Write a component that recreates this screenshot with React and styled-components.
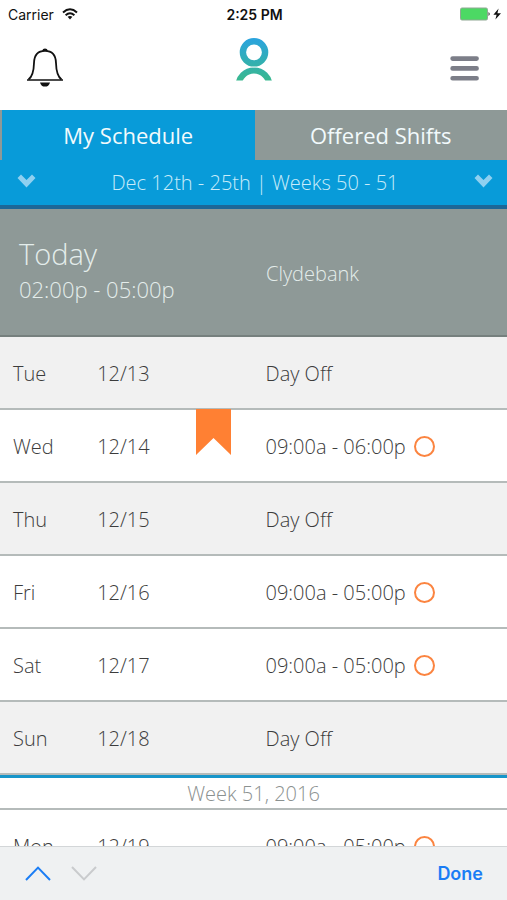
import React, { useState } from 'react'
import styled, { createGlobalStyle } from 'styled-components'

const GlobalStyle = createGlobalStyle`
  * {
    box-sizing: border-box;
  }

  body {
    margin: 0;
    background: #fff;
    font-family: 'Open Sans', 'Noto Sans', sans-serif;
    font-weight: 300;
    color: #3c3c3c;
  }

  button {
    border: 0;
    padding: 0;
    background: none;
    font: inherit;
    color: inherit;
    cursor: pointer;
  }

  svg {
    display: block;
  }
`

const Screen = styled.div`
  display: flex;
  flex-direction: column;
  height: 100vh;
`

const StatusBar = styled.div`
  display: grid;
  grid-template-columns: 1fr auto 1fr;
  align-items: center;
  flex: none;
  height: 28px;
  padding: 0 6px 0 8px;
  font-family: Inter, 'Liberation Sans', sans-serif;
  font-size: 14px;
  font-weight: 400;
  color: #111;
`

const StatusGroup = styled.div`
  display: flex;
  align-items: center;
  gap: 8px;
  justify-content: ${props => props.$end ? 'flex-end' : 'flex-start'};
`

const Clock = styled.time`
  font-weight: 600;
`

const Header = styled.header`
  display: grid;
  grid-template-columns: 1fr auto 1fr;
  align-items: start;
  flex: none;
  height: 82px;
  padding: 10px 27px 0;
`

const HeaderButton = styled.button`
  justify-self: ${props => props.$end ? 'end' : 'start'};
  padding-top: ${props => props.$end ? '18px' : '10px'};
`

const Tabs = styled.div`
  display: flex;
  flex: none;
  height: 50px;
  padding-left: 2px;
  background: #8e9997;
`

const Tab = styled.button`
  flex: 1;
  font-size: 22px;
  font-weight: 400;
  color: #f2fafc;
  background: ${props => props.$active ? '#089bd9' : '#8e9997'};
`

const Period = styled.div`
  display: flex;
  align-items: center;
  justify-content: space-between;
  flex: none;
  height: 49px;
  padding: 0 14px 0 17px;
  border-bottom: 4px solid #1d6797;
  background: #089bd9;
  font-size: 20px;
  color: #c9ecfa;
`

const PeriodButton = styled.button`
  padding-bottom: 4px;
`

const Schedule = styled.main`
  flex: 1;
  min-height: 0;
  overflow: hidden;
`

const Today = styled.section`
  display: grid;
  grid-template-columns: 13fr 12fr;
  align-items: center;
  height: 128px;
  padding: 0 13px 0 19px;
  border-bottom: 2px solid #76807e;
  background: #8e9997;
  color: #e4edeb;
  font-size: 20px;
`

const TodaySummary = styled.div`
  padding-bottom: 4px;
`

const TodayTitle = styled.h1`
  margin: 0;
  font-size: 29px;
  line-height: 38px;
  font-weight: 300;
`

const TodayHours = styled.div`
  font-size: 22px;
  line-height: 32px;
`

const Location = styled.div`
  padding-top: 2px;
`

const Days = styled.ul`
  margin: 0;
  padding: 0;
  list-style: none;
`

const Day = styled.li`
  position: relative;
  display: grid;
  grid-template-columns: 7fr 14fr 19fr;
  align-items: center;
  height: 73px;
  padding: 2px 13px 0;
  border-bottom: 2px solid #b5bbba;
  background: ${props => props.$off ? '#f1f1f1' : '#fff'};
  font-size: 20px;
`

const Shift = styled.div`
  display: flex;
  align-items: center;
  gap: 8px;
`

const Ring = styled.span`
  width: 21px;
  height: 21px;
  border: 2px solid #fb8440;
  border-radius: 50%;
`

const Flag = styled.svg`
  position: absolute;
  top: -1px;
  left: 196px;
`

const WeekHeading = styled.h2`
  height: 35px;
  margin: 0;
  border-top: 3px solid #1795c9;
  border-bottom: 2px solid #b5bbba;
  font-size: 20px;
  line-height: 31px;
  font-weight: 300;
  text-align: center;
  color: #8b9190;
`

const PickerBar = styled.div`
  display: flex;
  align-items: center;
  gap: 20px;
  flex: none;
  height: 54px;
  padding: 0 24px 0 25px;
  border-top: 1px solid #d3d6d8;
  background: #eff1f2;
`

const Done = styled.button`
  margin-left: auto;
  font-family: Inter, 'Liberation Sans', sans-serif;
  font-size: 18px;
  font-weight: 600;
  color: #1a7df5;
`

const WifiIcon = () => (
  <svg width="16" height="12" viewBox="0 0 16 12" fill="none" stroke="#111" strokeWidth="2">
    <path d="M1 4.4 Q8 -1.8 15 4.4" />
    <path d="M3.6 7.2 Q8 3.4 12.4 7.2" />
    <path d="M5.6 8.8 Q8 7 10.4 8.8 L8 11.5 Z" fill="#111" stroke="none" />
  </svg>
)

const BatteryIcon = () => (
  <svg width="41" height="14" viewBox="0 0 41 14">
    <rect x="0.5" y="1" width="27" height="12" rx="1.5" fill="#4cd964" stroke="#8fa893" />
    <path d="M28.5 5 Q31 7 28.5 9 Z" fill="#333" />
    <path d="M38.6 1.4 L33.4 7.8 H36.6 L35.4 12.6 L41 6.2 H37.4 Z" fill="#111" />
  </svg>
)

const BellIcon = () => (
  <svg width="36" height="39" viewBox="0 0 36 39" fill="none" stroke="#111">
    <path d="M15.2 3 Q15.6 0.6 18 0.6 Q20.4 0.6 20.8 3 Z" fill="#111" stroke="none" />
    <path d="M1.5 31.5 C5.5 28.5 6.8 23 7 15 C7.2 7 11 2.9 18 2.9 C25 2.9 28.8 7 29 15 C29.2 23 30.5 28.5 34.5 31.5" strokeWidth="1.8" />
    <path d="M0 32 H36" strokeWidth="1.6" />
    <path d="M13 34.4 H23 Q21.8 38.6 18 38.6 Q14.2 38.6 13 34.4 Z" fill="#111" stroke="none" />
  </svg>
)

const Logo = () => (
  <svg width="36" height="43" viewBox="0 0 36 43" fill="none" role="img" aria-label="Home">
    <defs>
      <linearGradient id="brand" gradientUnits="userSpaceOnUse" x1="0" y1="0" x2="0" y2="43">
        <stop offset="0" stopColor="#2aa3df" />
        <stop offset="1" stopColor="#39b98e" />
      </linearGradient>
      <clipPath id="shoulders">
        <rect x="0" y="26" width="36" height="16.5" />
      </clipPath>
    </defs>
    <circle cx="18" cy="48" r="15.5" stroke="url(#brand)" strokeWidth="6.2" clipPath="url(#shoulders)" />
    <circle cx="18" cy="14.3" r="14.9" fill="#fff" />
    <circle cx="18" cy="14.3" r="11.1" stroke="url(#brand)" strokeWidth="6.4" />
  </svg>
)

const MenuIcon = () => (
  <svg width="30" height="25" viewBox="0 0 30 25" stroke="#7c7e88" strokeWidth="4.6" strokeLinecap="round">
    <path d="M2.6 2.6 H26.6 M2.6 12.4 H26.6 M2.6 22.2 H26.6" />
  </svg>
)

const ChevronIcon = () => (
  <svg width="19" height="14" viewBox="0 0 19 14" fill="#8fd0f0">
    <path d="M0.5 4 L4 0.5 L9.5 6 L15 0.5 L18.5 4 L9.5 13.4 Z" />
  </svg>
)

const ArrowIcon = ({ down, color }) => (
  <svg width="26" height="15" viewBox="0 0 26 15" fill="none" stroke={color} strokeWidth="2">
    <path d={down ? 'M1 1 L13 13.4 L25 1' : 'M1 14 L13 1.6 L25 14'} />
  </svg>
)

const week50 = [
  { day: 'Tue', date: '12/13' },
  { day: 'Wed', date: '12/14', hours: '09:00a - 06:00p', flagged: true },
  { day: 'Thu', date: '12/15' },
  { day: 'Fri', date: '12/16', hours: '09:00a - 05:00p' },
  { day: 'Sat', date: '12/17', hours: '09:00a - 05:00p' },
  { day: 'Sun', date: '12/18' },
]

const week51 = [
  { day: 'Mon', date: '12/19', hours: '09:00a - 05:00p' },
]

const DayList = ({ days }) => (
  <Days>
    {days.map(({ day, date, hours, flagged }) => (
      <Day key={date} $off={!hours}>
        <span>{day}</span>
        <span>{date}</span>
        <Shift>
          {hours || 'Day Off'}
          {hours && <Ring />}
        </Shift>
        {flagged && (
          <Flag width="35" height="46" viewBox="0 0 35 46" fill="#ff8033">
            <path d="M0 0 H35 V46 L17.5 29 L0 46 Z" />
          </Flag>
        )}
      </Day>
    ))}
  </Days>
)

export default function App() {
  const [tab, setTab] = useState('mine')

  return (
    <Screen>
      <GlobalStyle />
      <StatusBar>
        <StatusGroup>
          Carrier
          <WifiIcon />
        </StatusGroup>
        <Clock>2:25 PM</Clock>
        <StatusGroup $end>
          <BatteryIcon />
        </StatusGroup>
      </StatusBar>

      <Header>
        <HeaderButton aria-label="Notifications"><BellIcon /></HeaderButton>
        <Logo />
        <HeaderButton $end aria-label="Menu"><MenuIcon /></HeaderButton>
      </Header>

      <Tabs role="tablist">
        <Tab role="tab" aria-selected={tab === 'mine'} $active={tab === 'mine'} onClick={() => setTab('mine')}>
          My Schedule
        </Tab>
        <Tab role="tab" aria-selected={tab === 'offered'} $active={tab === 'offered'} onClick={() => setTab('offered')}>
          Offered Shifts
        </Tab>
      </Tabs>

      <Period>
        <PeriodButton aria-label="Choose start"><ChevronIcon /></PeriodButton>
        <span>Dec 12th - 25th | Weeks 50 - 51</span>
        <PeriodButton aria-label="Choose end"><ChevronIcon /></PeriodButton>
      </Period>

      <Schedule>
        <Today>
          <TodaySummary>
            <TodayTitle>Today</TodayTitle>
            <TodayHours>02:00p - 05:00p</TodayHours>
          </TodaySummary>
          <Location>Clydebank</Location>
        </Today>
        <DayList days={week50} />
        <WeekHeading>Week 51, 2016</WeekHeading>
        <DayList days={week51} />
      </Schedule>

      <PickerBar>
        <button aria-label="Previous"><ArrowIcon color="#1a7df5" /></button>
        <button aria-label="Next"><ArrowIcon down color="#c9cbcd" /></button>
        <Done>Done</Done>
      </PickerBar>
    </Screen>
  )
}
